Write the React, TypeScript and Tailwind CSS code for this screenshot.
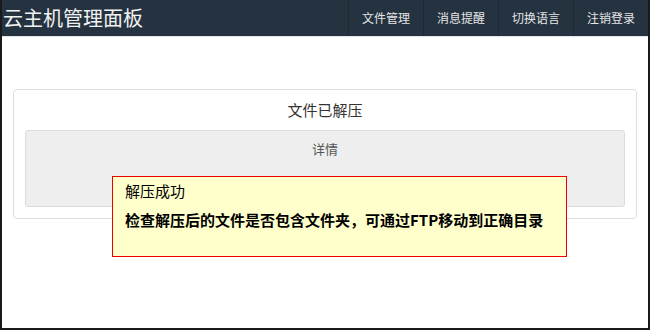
import React from "react";

const font = '"Microsoft YaHei", "Noto Sans CJK SC", "Liberation Sans", sans-serif';

export default function App() {
  const navs = ["文件管理", "消息提醒", "切换语言", "注销登录"];
  return (
    <div
      className="relative w-[650px] h-[330px] bg-white border-l-2 border-r-2 border-b-2 border-[#1a1a1a] overflow-hidden"
      style={{ fontFamily: font }}
    >
      <div className="flex h-[37px] items-stretch bg-[#253341] border-b border-[#dfe8ee]">
        <div className="flex-1 flex items-center pl-[1px] text-[20px] text-[#f2f2f2] leading-none">
          云主机管理面板
        </div>
        <div className="flex">
          {navs.map((n) => (
            <div
              key={n}
              className="w-[75px] flex items-center justify-center border-l border-[#1d2935] text-[12px] text-[#e6e6e6]"
            >
              {n}
            </div>
          ))}
        </div>
      </div>
      <div className="pt-[52px] px-[11px]">
        <div className="border border-[#dedede] rounded-[4px] px-[11px] pt-[10px] pb-[11px]">
          <div className="text-center text-[15px] leading-[20px] text-[#333]">文件已解压</div>
          <div className="mt-[10px] h-[77px] bg-[#eeeeee] border border-[#dcdcdc] rounded-[3px] pt-[10px] text-center text-[13px] leading-[16px] text-[#555]">
            详情
          </div>
        </div>
      </div>
      <div className="absolute left-[110px] top-[176px] w-[455px] h-[81px] bg-[#ffffcc] border border-[#ee0000] pl-[12px] pt-[5px]">
        <div className="text-[15px] leading-[18px] text-black">解压成功</div>
        <div className="mt-[11px] text-[15px] leading-[18px] font-bold text-black">
          检查解压后的文件是否包含文件夹，可通过FTP移动到正确目录
        </div>
      </div>
    </div>
  );
}
